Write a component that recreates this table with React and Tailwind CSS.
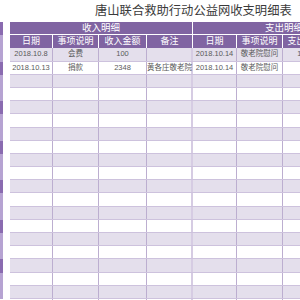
import React from 'react';

const FONT = { fontFamily: '"Liberation Sans", "Noto Sans CJK SC", sans-serif' };

const COLS = '43px 46px 48px 46px 44px 46px 46px 46px';

const ROWS = [
  ['2018.10.8', '会费', '100', '', '2018.10.14', '敬老院慰问', '1000', ''],
  ['2018.10.13', '捐款', '2348', '黄各庄敬老院', '2018.10.14', '敬老院慰问', '', ''],
];

const HEAD = ['日期', '事项说明', '收入金额', '备注', '日期', '事项说明', '支出金额', '备注'];

function cellBorder(i) {
  if (i === 3) return 'border-r-2 border-r-[#d6cce3]';
  return 'border-r border-r-[#bcaed0]';
}

export default function App() {
  const data = [...ROWS];
  while (data.length < 20) data.push(['', '', '', '', '', '', '', '']);

  const strip = [];
  for (let i = 0; i < 21; i++) {
    strip.push(
      <div key={i} className={`h-[13.2px] shrink-0 ${i % 3 === 0 ? 'bg-[#8a6bb0]' : 'bg-[#b6a3d2]'}`} />
    );
  }

  return (
    <div className="w-[300px] h-[300px] overflow-hidden bg-white flex" style={FONT}>
      {/* left stripe */}
      <div className="w-[3px] pt-[22px] flex flex-col shrink-0">{strip}</div>

      <div className="ml-[7px] flex flex-col min-w-0 flex-1 overflow-hidden">
        <div className="h-[22px] shrink-0 flex items-start pt-[3px] pl-[85px] text-[12.3px] leading-[16px] text-[#3a3a3a] whitespace-nowrap">
          唐山联合救助行动公益网收支明细表
        </div>

        <div className="w-[365px]">
          {/* header row 1 */}
          <div className="grid h-[13.2px] bg-[#8064a2] text-white text-[9.5px] leading-[12.2px] border-b border-white" style={{ gridTemplateColumns: '183px 182px' }}>
            <div className="text-center border-r border-white">收入明细</div>
            <div className="text-center">支出明细</div>
          </div>
          {/* header row 2 */}
          <div className="grid h-[13.2px] bg-[#8064a2] text-white text-[9px] leading-[12.2px]" style={{ gridTemplateColumns: COLS }}>
            {HEAD.map((h, i) => (
              <div key={i} className="text-center border-r border-white whitespace-nowrap">{h}</div>
            ))}
          </div>
          {/* data rows */}
          {data.map((row, r) => (
            <div
              key={r}
              className={`grid h-[13.2px] text-[7.5px] text-[#5a5a5a] leading-[12.2px] border-b border-[#cdc2dd] ${r % 2 === 0 ? 'bg-[#e4dfec]' : 'bg-white'}`}
              style={{ gridTemplateColumns: COLS }}
            >
              {row.map((c, i) => (
                <div key={i} className={`text-center whitespace-nowrap ${cellBorder(i)}`}>{c}</div>
              ))}
            </div>
          ))}
        </div>
      </div>
    </div>
  );
}
